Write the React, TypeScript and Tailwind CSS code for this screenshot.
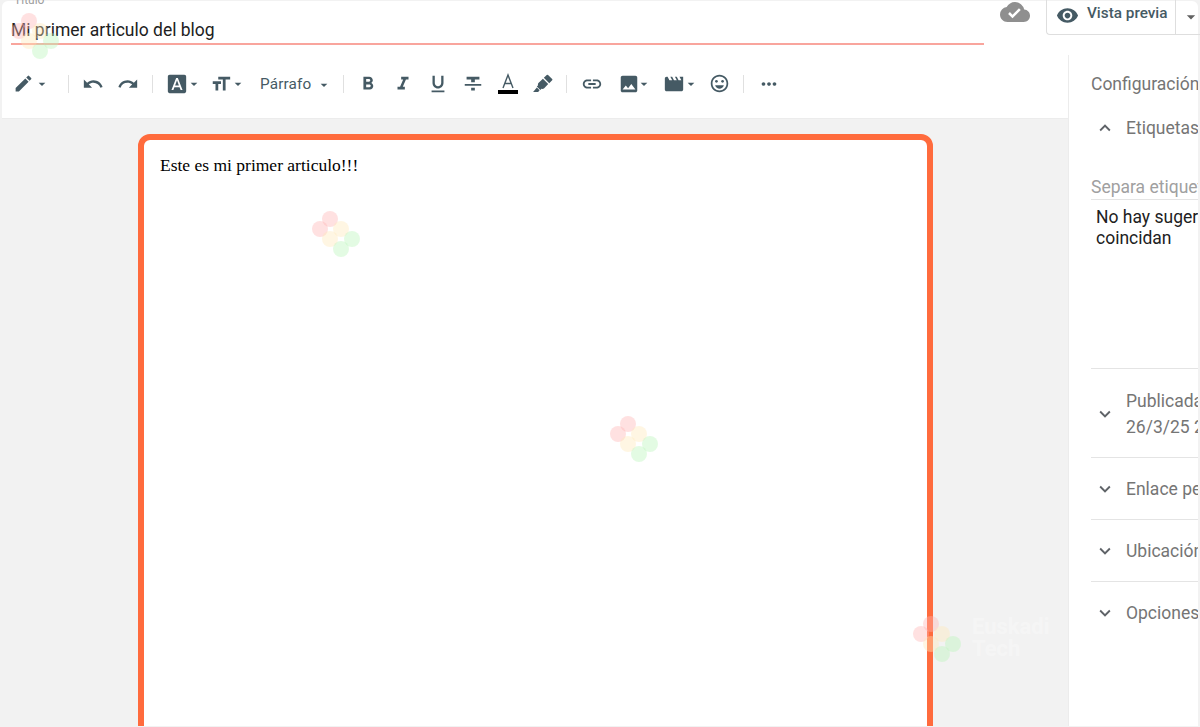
import React from "react";
import {
  MdEdit, MdUndo, MdRedo, MdFontDownload, MdFormatSize, MdArrowDropDown, MdFormatBold, MdFormatItalic,
  MdFormatUnderlined, MdFormatStrikethrough, MdLink, MdImage, MdMovie, MdOutlineEmojiEmotions, MdMoreHoriz,
  MdCloudDone, MdVisibility, MdExpandMore, MdExpandLess,
} from "react-icons/md";

const Sep = () => <div className="w-px h-[18px] bg-[#e0e0e0] shrink-0" />;

function Tool({ children, w = 35, caret = false, caretClass = "-ml-[2px] -mr-[2px]" }: { children: React.ReactNode; w?: number; caret?: boolean; caretClass?: string }) {
  return (
    <div className="flex items-center justify-center shrink-0 text-[#455a64]" style={{ width: w }}>
      {children}
      {caret && <MdArrowDropDown size={16} className={`shrink-0 ${caretClass}`} />}
    </div>
  );
}

function Mark({ text = false, className }: { text?: boolean; className: string }) {
  const dots = [
    ["left-[10px] top-0", "bg-[#ffb3b3]"],
    ["left-0 top-[10px]", "bg-[#ffb3b3]"],
    ["left-[21px] top-[10px]", "bg-[#ffe9b8]"],
    ["left-[10px] top-[20px]", "bg-[#ffe9b8]"],
    ["left-[32px] top-[20px]", "bg-[#b8f5b8]"],
    ["left-[21px] top-[30px]", "bg-[#b8f5b8]"],
  ];
  return (
    <div className={`absolute w-[140px] h-[46px] pointer-events-none ${className}`}>
      {dots.map(([p, c], i) => (
        <div key={i} className={`absolute w-[16px] h-[16px] rounded-full opacity-40 ${p} ${c}`} />
      ))}
      {text && (
        <div className="absolute left-[59px] top-0 text-white opacity-30 font-bold text-[22px] leading-[22px] font-['Roboto',sans-serif]">
          Euskadi<br />Tech
        </div>
      )}
    </div>
  );
}

function Section({ open = false, children, className = "" }: { open?: boolean; children: React.ReactNode; className?: string }) {
  return (
    <div className={`flex items-center pl-[3px] text-[17.5px] text-[#757575] ${className}`}>
      {open ? <MdExpandLess size={22} className="text-[#5f6368] shrink-0" /> : <MdExpandMore size={22} className="text-[#5f6368] shrink-0" />}
      <div className="ml-[10px] leading-[26px] whitespace-nowrap">{children}</div>
    </div>
  );
}

export default function App() {
  return (
    <div className="relative w-[1200px] h-[727px] overflow-hidden bg-[#f2f2f2] pt-px pl-[2px] pr-[2px] font-['Roboto',sans-serif]">
      <div className="flex flex-col h-[725px] bg-white rounded-tl-[6px] rounded-tr-[6px]">
        {/* title row */}
        <div className="relative flex h-[54px] shrink-0">
          <div className="w-[973px] ml-[9px] shrink-0 relative">
            <div className="text-[12px] leading-[12px] -mt-[7px] ml-[3px] text-[#9e9e9e]">Título</div>
            <div className="mt-[12px] h-[25px] leading-[24px] text-[17.5px] text-[#212121] border-b-2 border-[#f9a59d] box-content">Mi primer articulo del blog</div>
          </div>
          <MdCloudDone size={30} className="ml-[16px] -mt-[4px] text-[#8f8f8f] shrink-0" />
          <div className="ml-[16px] flex-1 h-[35px] -mt-[1px] flex items-center border-l border-b border-[#dedede] rounded-bl-[4px] text-[#455a64] whitespace-nowrap">
            <MdVisibility size={23} className="ml-[9px] -mt-[3px] shrink-0" />
            <span className="ml-[8px] text-[15.3px] font-medium -mt-[7px]">Vista previa</span>
            <div className="ml-[8px] w-px h-[35px] bg-[#dedede]" />
            <MdArrowDropDown size={20} className="ml-[5px] shrink-0 text-[#616161]" />
          </div>
        </div>
        <div className="flex flex-1 min-h-0">
          {/* main */}
          <div className="flex flex-col w-[1066px] shrink-0">
            <div className="h-[64px] shrink-0 flex items-center border-b border-[#ececec] pb-[6px] pl-[9px]">
              <Tool w={39} caret caretClass="ml-0 -mr-[2px]"><MdEdit size={21} /></Tool>
              <div className="w-[18px]" />
              <Sep />
              <div className="w-[6px]" />
              <Tool><MdUndo size={22} /></Tool>
              <Tool><MdRedo size={22} /></Tool>
              <div className="w-[7px]" />
              <Sep />
              <div className="w-[9px]" />
              <Tool w={42} caret><MdFontDownload size={22} /></Tool>
              <div className="w-[4px]" />
              <Tool w={37} caret><MdFormatSize size={22} /></Tool>
              <div className="w-[15px]" />
              <div className="w-[83px] shrink-0 flex items-center text-[15.3px] text-[#455a64] tracking-[0.15px]">
                <span className="mt-px">Párrafo</span>
                <MdArrowDropDown size={16} className="ml-[5px] mt-[2px]" />
              </div>
              <Sep />
              <div className="w-[6px]" />
              <Tool><MdFormatBold size={22} /></Tool>
              <Tool><MdFormatItalic size={22} /></Tool>
              <Tool><MdFormatUnderlined size={22} /></Tool>
              <Tool><MdFormatStrikethrough size={22} /></Tool>
              <Tool>
                <div className="flex flex-col items-center">
                  <svg viewBox="0 0 20 16" width="20" height="16" fill="none" stroke="#455a64" strokeWidth="1.4"><path d="M5 15 L10 2 L15 15 M6.6 10.5 H13.4" /></svg>
                  <div className="w-[20px] h-[4px] mt-px bg-black" />
                </div>
              </Tool>
              <Tool>
                <svg viewBox="0 0 24 24" width="22" height="22" fill="#455a64"><path d="M17.5 2.2 22 6.6a1 1 0 0 1 0 1.4l-3.2 3.2-5.9-5.9 3.2-3.1a1 1 0 0 1 1.4 0ZM11.9 6.3l5.8 5.8-4.4 4.5c-.7.7-1.9 1-2.9.7l-1.3 1.3-3.8-3.8 1.3-1.4c-.3-1-.1-2.2.7-2.9ZM5.3 15.7l3 3-1.6 1.9H1.2Z" /></svg>
              </Tool>
              <div className="w-[6px]" />
              <Sep />
              <div className="w-[7px]" />
              <Tool><MdLink size={22} /></Tool>
              <div className="w-[7px]" />
              <Tool w={36} caret caretClass="-ml-[4px] -mr-[2px]"><MdImage size={22} /></Tool>
              <div className="w-[5px]" />
              <Tool w={45} caret><MdMovie size={22} /></Tool>
              <div className="w-[5px]" />
              <Tool w={24}><MdOutlineEmojiEmotions size={21} /></Tool>
              <div className="w-[12px]" />
              <Sep />
              <div className="w-[7px]" />
              <Tool><MdMoreHoriz size={22} /></Tool>
            </div>
            <div className="flex-1 min-h-0 overflow-hidden bg-[#f2f2f2] pt-[15px] pl-[136px]">
              <div className="w-[795px] h-[640px] border-[6px] border-[#ff6b3d] rounded-[12px] bg-white pt-[13px] pl-[16px]">
                <p className="text-[17.5px] leading-[24px] text-black font-['Liberation_Serif',serif]">Este es mi primer articulo!!!</p>
              </div>
            </div>
          </div>
          {/* sidebar */}
          <div className="w-[130px] shrink-0 overflow-hidden border-l border-[#ececec] pl-[22px]">
            <div className="w-[300px]">
              <div className="mt-[16px] h-[26px] leading-[26px] text-[17.5px] text-[#757575]">Configuración de la entrada</div>
              <Section open className="mt-[18px]">Etiquetas</Section>
              <div className="mt-[33px] h-[26px] leading-[26px] text-[17.5px] text-[#a0a0a0] border-b border-[#e4e4e4] pb-[2px]">Separa etiquetas con comas</div>
              <div className="mt-[7px] ml-[5px] w-[215px] text-[17.5px] leading-[21px] text-[#212121]">No hay sugerencias que coincidan</div>
              <div className="mt-[119px] h-px bg-[#e4e4e4]" />
              <div className="h-[88px] flex items-center pt-[2px]">
                <Section><div>Publicada el</div><div>26/3/25 20:30</div></Section>
              </div>
              <div className="h-px bg-[#e4e4e4]" />
              <Section className="h-[61px]">Enlace permanente</Section>
              <div className="h-px bg-[#e4e4e4]" />
              <Section className="h-[61px]">Ubicación</Section>
              <div className="h-px bg-[#e4e4e4]" />
              <Section className="h-[61px]">Opciones</Section>
            </div>
          </div>
        </div>
      </div>
      <Mark className="left-[11px] top-[13px]" />
      <Mark className="left-[312px] top-[211px]" />
      <Mark className="left-[610px] top-[416px]" />
      <Mark text className="left-[913px] top-[616px]" />
    </div>
  );
}
